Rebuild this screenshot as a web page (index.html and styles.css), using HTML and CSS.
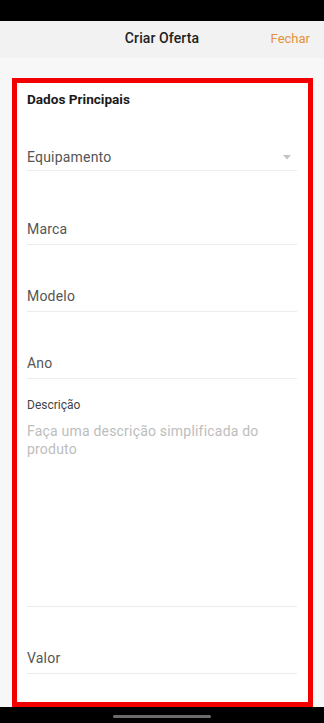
FILE: index.html
```html
<!DOCTYPE html>
<html lang="pt">
<head>
<meta charset="utf-8">
<meta name="viewport" content="width=device-width, initial-scale=1">
<title>Criar Oferta</title>
<link rel="stylesheet" href="styles.css">
</head>
<body>
<div class="screen">
  <div class="statusbar"></div>
  <header class="topbar">
    <span class="topbar-title">Criar Oferta</span>
    <span class="topbar-close">Fechar</span>
  </header>
  <main class="content">
    <section class="card">
      <h2 class="card-title">Dados Principais</h2>
      <div class="field field-select">
        <span class="field-text">Equipamento</span>
        <svg class="caret" width="8" height="5" viewBox="0 0 8 5"><path d="M0 0H8L4 4.5Z" fill="#c4c4c4"/></svg>
      </div>
      <div class="field field-marca"><span class="field-text">Marca</span></div>
      <div class="field"><span class="field-text">Modelo</span></div>
      <div class="field"><span class="field-text">Ano</span></div>
      <div class="field field-area">
        <span class="area-label">Descrição</span>
        <span class="area-placeholder">Faça uma descrição simplificada do produto</span>
      </div>
      <div class="field"><span class="field-text">Valor</span></div>
    </section>
  </main>
  <div class="navbar"><span class="home-indicator"></span></div>
</div>
</body>
</html>
```
FILE: styles.css
```css
* { box-sizing: border-box; }
html, body { margin: 0; padding: 0; }
body {
  font-family: Roboto, "Noto Sans", "Liberation Sans", sans-serif;
  background: #f7f7f7;
  color: #222;
}
.screen {
  width: 324px;
  height: 723px;
  display: flex;
  flex-direction: column;
  overflow: hidden;
}
.statusbar { height: 21px; background: #000; flex: none; }
.topbar {
  height: 37px;
  flex: none;
  background: #f2f2f2;
  display: flex;
  align-items: flex-start;
  justify-content: center;
  padding-top: 8px;
  position: relative;
}
.topbar-title { font-size: 14px; line-height: 18px; font-weight: 500; color: #1e1e1e; letter-spacing: 0.1px; }
.topbar-close {
  position: absolute;
  right: 14px;
  top: 9px;
  font-size: 13px;
  line-height: 17px;
  color: #e5913a;
}
.content {
  flex: 1;
  padding: 20px 11px 0 12px;
  display: flex;
  flex-direction: column;
}
.card {
  flex: 1;
  background: #fff;
  border: 5px solid #f20000;
  padding: 6px 11px 0 10px;
  display: flex;
  flex-direction: column;
}
.card-title {
  margin: 0;
  font-size: 13.6px;
  font-weight: 700;
  line-height: 20px;
  color: #1a1a1a;
}
.field {
  display: flex;
  align-items: center;
  border-bottom: 1px solid #ececec;
  padding-bottom: 5px;
  margin-top: 41px;
}
.field-text {
  flex: 1;
  font-size: 14px;
  line-height: 20px;
  color: #555;
  letter-spacing: 0.2px;
}
.field-select { margin-top: 38px; padding-bottom: 3px; }
.caret { margin-right: 6px; }
.field-marca { margin-top: 48px; }
.field-area {
  margin-top: 18px;
  flex-direction: column;
  align-items: stretch;
  padding-bottom: 148px;
}
.area-label {
  font-size: 12px;
  line-height: 16px;
  color: #444;
}
.area-placeholder {
  margin-top: 9px;
  font-size: 14px;
  line-height: 18px;
  color: #bdbdbd;
  letter-spacing: 0.2px;
  padding-right: 30px;
}
.navbar {
  height: 16px;
  flex: none;
  background: #000;
  display: flex;
  justify-content: center;
  padding-top: 8px;
}
.home-indicator {
  width: 98px;
  height: 3px;
  border-radius: 2px;
  background: #6b6b6b;
}
```
